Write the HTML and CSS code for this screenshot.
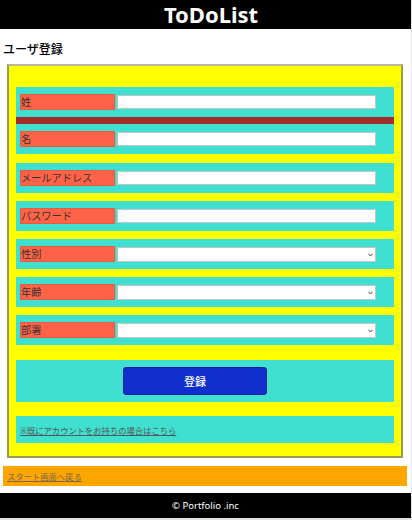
FILE: index.html
```html
<!DOCTYPE html>
<html lang="ja">
<head>
<meta charset="utf-8">
<title>ToDoList</title>
<link rel="stylesheet" href="styles.css">
</head>
<body>
<div class="page">
  <header class="site-header"><h1 class="site-title">ToDoList</h1></header>
  <h2 class="page-title">ユーザ登録</h2>
  <form class="reg-form">
    <fieldset class="reg-fieldset">
      <div class="form-body">
        <div class="name-group">
          <div class="row"><label class="lbl">姓</label><input class="field" type="text"></div>
          <div class="divider"></div>
          <div class="row"><label class="lbl">名</label><input class="field" type="text"></div>
        </div>
        <div class="row"><label class="lbl">メールアドレス</label><input class="field" type="text"></div>
        <div class="row"><label class="lbl">パスワード</label><input class="field" type="password"></div>
        <div class="row"><label class="lbl">性別</label><div class="select-wrap"><select class="field select"><option></option></select><svg class="chev" width="5" height="4" viewBox="0 0 5 4"><path d="M0.5 0.8 L2.5 3 L4.5 0.8" fill="none" stroke="#444" stroke-width="1"/></svg></div></div>
        <div class="row"><label class="lbl">年齢</label><div class="select-wrap"><select class="field select"><option></option></select><svg class="chev" width="5" height="4" viewBox="0 0 5 4"><path d="M0.5 0.8 L2.5 3 L4.5 0.8" fill="none" stroke="#444" stroke-width="1"/></svg></div></div>
        <div class="row"><label class="lbl">部署</label><div class="select-wrap"><select class="field select"><option></option></select><svg class="chev" width="5" height="4" viewBox="0 0 5 4"><path d="M0.5 0.8 L2.5 3 L4.5 0.8" fill="none" stroke="#444" stroke-width="1"/></svg></div></div>
        <div class="submit-row"><button class="btn" type="button">登録</button></div>
        <div class="link-row"><a class="login-link" href="#">※既にアカウントをお持ちの場合はこちら</a></div>
      </div>
    </fieldset>
  </form>
  <div class="back-bar"><a class="back-link" href="#">スタート画面へ戻る</a></div>
  <footer class="site-footer">© Portfolio .inc</footer>
</div>
</body>
</html>
```
FILE: styles.css
```css
html {
  background: #e4e4e4;
}
body {
  margin: 0;
  width: 411px;
  background: #fff;
  font-family: "Noto Sans", "Noto Sans CJK JP", sans-serif;
}
.site-header {
  background: #000;
  height: 29px;
  display: flex;
  align-items: center;
  justify-content: center;
  padding-left: 11px;
}
.site-title {
  margin: 0;
  color: #fff;
  font-size: 22px;
  font-weight: 700;
  line-height: 29px;
}
.page-title {
  margin: 0;
  padding: 13px 0 0 3px;
  font-size: 12px;
  line-height: 16px;
  font-weight: 500;
  color: #000;
}
.reg-form {
  margin: 6px 8px 0 7px;
}
.reg-fieldset {
  margin: 0;
  min-width: 0;
  padding: 21px 7px 13px;
  border: 2px solid;
  border-color: #b8b898 #9a9a50 #9a9a50 #9a9a50;
  background: #ffff00;
}
.form-body {
  display: flex;
  flex-direction: column;
  gap: 8px;
}
.name-group {
  margin-bottom: 1px;
}
.row {
  box-sizing: border-box;
  height: 30px;
  background: #40e0d0;
  display: flex;
  align-items: flex-start;
  gap: 2px;
  padding: 7px 4px 0;
}
.lbl {
  box-sizing: border-box;
  width: 95px;
  height: 16px;
  background: #ff6347;
  border: 1px solid #ec5a3e;
  font-size: 10.2px;
  line-height: 14px;
  color: #333;
  white-space: nowrap;
}
.field {
  box-sizing: border-box;
  width: 259px;
  height: 14px;
  margin: 1px 0 0;
  padding: 0;
  border: 1px solid #c4c4c4;
  background: #fff;
  font-size: 9px;
}
.select-wrap {
  position: relative;
  width: 259px;
  height: 15px;
  margin-top: 1px;
}
.select {
  appearance: none;
  -webkit-appearance: none;
  display: block;
  height: 15px;
  margin: 0;
  border-radius: 0;
}
.chev {
  position: absolute;
  right: 3px;
  top: 6px;
}
.divider {
  height: 7px;
  background: #a52a2a;
}
.submit-row {
  box-sizing: border-box;
  height: 42px;
  margin-top: 7px;
  background: #40e0d0;
  padding: 7px 0 0 107px;
}
.btn {
  box-sizing: border-box;
  width: 144px;
  height: 28px;
  background: #0f2fcf;
  border: 1px solid #0b1f8f;
  border-radius: 3px;
  color: #fff;
  font-family: "Noto Sans", "Noto Sans CJK JP", sans-serif;
  font-size: 11px;
  font-weight: 500;
  padding: 0;
}
.link-row {
  box-sizing: border-box;
  height: 27px;
  margin-top: 6px;
  background: #40e0d0;
  display: flex;
  align-items: center;
  padding-left: 4px;
}
.login-link {
  font-size: 8.3px;
  color: #555;
  text-decoration: underline;
}
.back-bar {
  box-sizing: border-box;
  height: 20px;
  margin: 8px 4px 0 3px;
  background: #ffa500;
  display: flex;
  align-items: center;
  padding-left: 4px;
}
.back-link {
  font-size: 8.3px;
  color: #766a50;
  text-decoration: underline;
}
.site-footer {
  height: 25px;
  margin-top: 7px;
  background: #000;
  color: #fff;
  font-size: 9.5px;
  display: flex;
  align-items: center;
  justify-content: center;
}
```
